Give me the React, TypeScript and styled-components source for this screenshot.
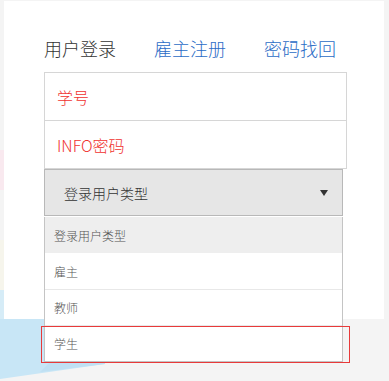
import { useState } from "react";
import styled, { createGlobalStyle } from "styled-components";

const GlobalStyle = createGlobalStyle`
  html, body {
    margin: 0;
    padding: 0;
    background: #f4f4f4;
    font-family: "Noto Sans CJK SC", "Noto Sans", sans-serif;
  }
  * {
    box-sizing: border-box;
  }
`;

const Page = styled.div`
  position: relative;
  width: 389px;
  height: 381px;
  padding: 1px 5px 0 4px;
  overflow: hidden;
`;

const Backdrop = styled.svg`
  position: absolute;
  left: 0;
  top: 0;
  z-index: 0;
`;

const Card = styled.div`
  position: relative;
  z-index: 1;
  height: 318px;
  background: #ffffff;
  padding: 35px 0 0 40px;
`;

const Tabs = styled.div`
  display: flex;
  gap: 38px;
  height: 24px;
  align-items: center;
  margin-bottom: 12px;
`;

const Tab = styled.a<{ $active?: boolean }>`
  font-size: 18px;
  font-weight: 300;
  line-height: 24px;
  color: ${(p) => (p.$active ? "#333333" : "#2b6cc6")};
  text-decoration: none;
  cursor: pointer;
`;

const Field = styled.div`
  width: 303px;
  height: 49px;
  border: 1px solid #d6d6d6;
  display: flex;
  align-items: center;
  padding-left: 12px;
  font-size: 16px;
  font-weight: 300;
  color: #f0322f;
  & + & {
    border-top: none;
    height: 48px;
  }
`;

const Select = styled.div`
  width: 299px;
  height: 47px;
  background: #e6e6e6;
  border: 1px solid #b8b8b8;
  display: flex;
  align-items: center;
  justify-content: space-between;
  padding: 0 14px 0 19px;
  font-size: 14px;
  font-weight: 300;
  color: #333333;
`;

const Arrow = styled.span`
  width: 0;
  height: 0;
  border-left: 4px solid transparent;
  border-right: 4px solid transparent;
  border-top: 6px solid #333333;
  margin-top: 1px;
`;

const Menu = styled.ul`
  position: relative;
  list-style: none;
  margin: 1px 0 0;
  padding: 0;
  width: 299px;
  border-left: 1px solid #c4c4c4;
  border-right: 1px solid #c4c4c4;
  border-bottom: 2px solid #c4c4c4;
  background: #ffffff;
`;

const Option = styled.li<{ $header?: boolean }>`
  height: 36px;
  display: flex;
  align-items: center;
  padding-left: 9px;
  font-size: 12px;
  font-weight: 300;
  color: #555555;
  background: ${(p) => (p.$header ? "#eeeeee" : "#ffffff")};
  border-top: ${(p) => (p.$header ? "none" : "1px solid #e8e8e8")};
  &:nth-child(2) {
    border-top: none;
  }
`;

const Focus = styled.div`
  position: absolute;
  left: -4px;
  top: 109px;
  width: 309px;
  height: 37px;
  border: 1px solid #e83a3a;
  pointer-events: none;
`;

const options = ["雇主", "教师", "学生"];

export default function App() {
  const [selected] = useState(2);
  return (
    <>
      <GlobalStyle />
      <Page>
        <Backdrop width="389" height="381">
          <rect x="0" y="150" width="4" height="40" fill="#f9e9ef" />
          <rect x="0" y="240" width="4" height="50" fill="#f6f5ec" />
          <rect x="0" y="290" width="4" height="30" fill="#d6ecf7" />
          <polygon points="0,319 105,319 105,364 0,379" fill="#c8e6f6" />
          <polygon points="60,352 105,345 105,364 40,372" fill="#bfe0f3" />
        </Backdrop>
        <Card>
          <Tabs>
            <Tab $active>用户登录</Tab>
            <Tab>雇主注册</Tab>
            <Tab>密码找回</Tab>
          </Tabs>
          <Field>学号</Field>
          <Field>INFO密码</Field>
          <Select>
            登录用户类型
            <Arrow />
          </Select>
          <Menu>
            <Option $header>登录用户类型</Option>
            {options.map((o) => (
              <Option key={o}>{o}</Option>
            ))}
            {selected >= 0 && <Focus />}
          </Menu>
        </Card>
      </Page>
    </>
  );
}
